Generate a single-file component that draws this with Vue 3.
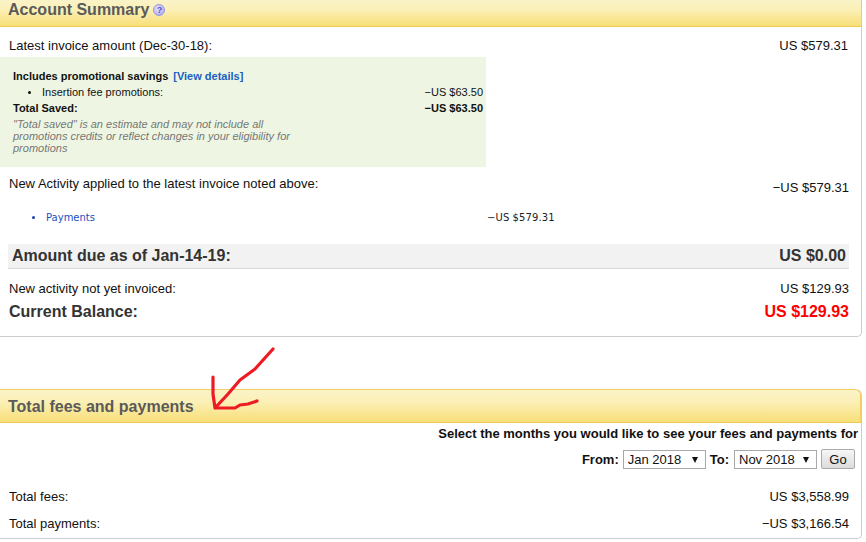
<script setup>
const promoRows = [{ label: 'Insertion fee promotions:', amount: '−US $63.50' }]
const months = { from: ['Jan 2018'], to: ['Nov 2018'] }
</script>

<template>
  <div class="page">
    <section class="card summary">
      <header class="card-head summary-head">
        <h2>Account Summary</h2>
        <span class="help">?</span>
      </header>

      <div class="row latest">
        <span>Latest invoice amount (Dec-30-18):</span>
        <span>US $579.31</span>
      </div>

      <div class="promo">
        <div class="promo-title">
          <b>Includes promotional savings</b>
          <a class="details">[View details]</a>
        </div>
        <div v-for="row in promoRows" :key="row.label" class="promo-item">
          <span class="promo-label"><i class="dot"></i>{{ row.label }}</span>
          <span>{{ row.amount }}</span>
        </div>
        <div class="promo-total">
          <span>Total Saved:</span>
          <span>−US $63.50</span>
        </div>
        <p class="promo-note">
          "Total saved" is an estimate and may not include all promotions credits or reflect changes in your eligibility for promotions
        </p>
      </div>

      <div class="row activity">
        <span>New Activity applied to the latest invoice noted above:</span>
        <span class="activity-amt">−US $579.31</span>
      </div>

      <div class="payments">
        <span class="payments-label"><i class="dot blue"></i><a>Payments</a></span>
        <span class="payments-amt">−US $579.31</span>
      </div>

      <div class="due">
        <span>Amount due as of Jan-14-19:</span>
        <span>US $0.00</span>
      </div>

      <div class="row not-invoiced">
        <span>New activity not yet invoiced:</span>
        <span>US $129.93</span>
      </div>
      <div class="row balance">
        <span>Current Balance:</span>
        <span class="red">US $129.93</span>
      </div>
    </section>

    <section class="card fees">
      <header class="card-head fees-head">
        <h2>Total fees and payments</h2>
      </header>

      <div class="select-title">Select the months you would like to see your fees and payments for</div>
      <div class="filter">
        <label>From:</label>
        <div class="month-wrap">
          <select class="month"><option v-for="m in months.from" :key="m">{{ m }}</option></select>
        </div>
        <label class="to">To:</label>
        <div class="month-wrap">
          <select class="month"><option v-for="m in months.to" :key="m">{{ m }}</option></select>
        </div>
        <button class="go">Go</button>
      </div>

      <div class="row fee-row first">
        <span>Total fees:</span>
        <span>US $3,558.99</span>
      </div>
      <div class="row fee-row">
        <span>Total payments:</span>
        <span>−US $3,166.54</span>
      </div>
    </section>

    <!-- hand drawn arrow on top of the screenshot -->
    <svg class="arrow" width="80" height="75" viewBox="0 0 80 75">
      <path d="M64 3 L55 13 L46 23 L31 34 L19 48 L6 62 M4 31 L4 48 L6 62 L26 62 L31 59 L39 58 L48 55" fill="none" stroke="#ed1c24" stroke-width="3.2" stroke-linecap="round" stroke-linejoin="round"/>
    </svg>
  </div>
</template>

<style>
html, body {
  margin: 0;
  background: #fff;
}
</style>

<style scoped>
.page {
  position: relative;
  width: 866px;
  height: 542px;
  overflow: hidden;
  font-family: "Liberation Sans", Arial, sans-serif;
  font-size: 13px;
  color: #111;
  background: #fff;
}

.card {
  box-sizing: border-box;
  width: 862px;
  background: #fff;
  border-right: 1px solid #ccc;
  border-bottom: 1px solid #ccc;
  border-radius: 0 0 5px 0;
}

.summary {
  height: 337px;
  padding-bottom: 1px;
}

.fees {
  height: 150px;
  margin-top: 52px;
  border-radius: 0 6px 5px 0;
}

.card-head {
  display: flex;
  align-items: center;
  box-sizing: border-box;
  background: linear-gradient(#faf3c8 0%, #fbf0b8 35%, #f8df78 100%);
  border-bottom: 1px solid #ecc94f;
}

.card-head h2 {
  margin: 0;
  font-size: 16px;
  font-weight: bold;
  color: #5a5a5a;
}

.summary-head {
  height: 27px;
  padding: 0 0 6px 8px;
}

.fees-head {
  height: 34px;
  padding: 2px 0 0 8px;
  border-top: 1px solid #f3cf5d;
  border-right: 1px solid #f3cf5d;
  border-radius: 0 6px 0 0;
}

.help {
  width: 12px;
  height: 12px;
  margin-left: 4px;
  border-radius: 50%;
  background: radial-gradient(circle at 40% 35%, #e6e4fb, #a5a0ee);
  border: 1px solid #9a94e6;
  box-sizing: border-box;
  color: #5b52c8;
  font-size: 9px;
  font-weight: bold;
  line-height: 10px;
  text-align: center;
}

.row {
  display: flex;
  justify-content: space-between;
}

.latest {
  height: 30px;
  padding: 11px 13px 0 9px;
  box-sizing: border-box;
  line-height: 15px;
}

.promo {
  box-sizing: border-box;
  width: 486px;
  height: 110px;
  padding: 11px 3px 0 13px;
  background: #eef6e3;
  font-size: 11px;
  line-height: 16px;
}

.promo-title b {
  font-weight: bold;
}

.details {
  margin-left: 5px;
  font-weight: bold;
  color: #1a5fc0;
}

.promo-item,
.promo-total {
  display: flex;
  justify-content: space-between;
}

.promo-label {
  display: flex;
  align-items: center;
  padding-left: 15px;
}

.dot {
  flex: none;
  width: 3px;
  height: 3px;
  margin-right: 11px;
  border-radius: 50%;
  background: #111;
}

.dot.blue {
  margin-right: 11px;
  background: #1a3fb0;
}

.promo-total {
  font-weight: bold;
}

.promo-note {
  width: 296px;
  margin: 0;
  color: #767676;
  font-style: italic;
  line-height: 12px;
  padding-top: 2px;
}

.activity {
  height: 31px;
  padding: 9px 12px 0 9px;
  box-sizing: border-box;
  line-height: 15px;
}

.activity-amt {
  margin-top: 4px;
}

.payments {
  display: flex;
  height: 27px;
  padding: 13px 0 0 32px;
  font-family: "DejaVu Sans", Verdana, sans-serif;
  font-size: 10px;
  line-height: 13px;
}

.payments-label {
  display: flex;
  align-items: center;
  width: 455px;
  height: 13px;
  color: #1a4fc0;
}

.payments-amt {
  color: #222;
  letter-spacing: 0.1px;
}

.due {
  display: flex;
  justify-content: space-between;
  align-items: center;
  box-sizing: border-box;
  height: 25px;
  margin: 6px 12px 0 8px;
  padding: 0 3px 0 4px;
  background: #f2f2f2;
  border-bottom: 1px solid #d8d8d8;
  font-size: 16px;
  font-weight: bold;
  color: #333;
}

.not-invoiced {
  padding: 12px 12px 0 9px;
  line-height: 15px;
}

.balance {
  padding: 7px 12px 0 9px;
  font-size: 16px;
  font-weight: bold;
  line-height: 18px;
  color: #333;
}

.red {
  color: #f00;
}

.select-title {
  padding: 3px 3px 0 0;
  text-align: right;
  font-weight: bold;
  line-height: 15px;
}

.filter {
  display: flex;
  justify-content: flex-end;
  align-items: center;
  gap: 4px;
  height: 22px;
  margin-top: 7px;
  padding-right: 6px;
  font-weight: bold;
}

.to {
  margin-right: 1px;
}

.month-wrap {
  position: relative;
  height: 19px;
}

.month-wrap::after {
  content: "";
  position: absolute;
  right: 8px;
  top: 7px;
  border-left: 3.5px solid transparent;
  border-right: 3.5px solid transparent;
  border-top: 6px solid #111;
  pointer-events: none;
}

.month {
  display: block;
  box-sizing: border-box;
  width: 83px;
  height: 19px;
  padding: 0 0 0 4px;
  appearance: none;
  background: #fff;
  border: 1px solid #a9a9a9;
  border-radius: 0;
  font-family: "Liberation Sans", Arial, sans-serif;
  font-size: 13px;
  color: #111;
}

.go {
  box-sizing: border-box;
  width: 34px;
  height: 20px;
  padding: 0;
  background: linear-gradient(#f6f6f6, #dcdcdc);
  border: 1px solid #aaa;
  border-radius: 2px;
  font-family: "Liberation Sans", Arial, sans-serif;
  font-size: 13px;
  color: #111;
}

.fee-row {
  padding: 12px 12px 0 9px;
  line-height: 15px;
}

.fee-row.first {
  padding-top: 19px;
}

.arrow {
  position: absolute;
  left: 209px;
  top: 346px;
}
</style>
